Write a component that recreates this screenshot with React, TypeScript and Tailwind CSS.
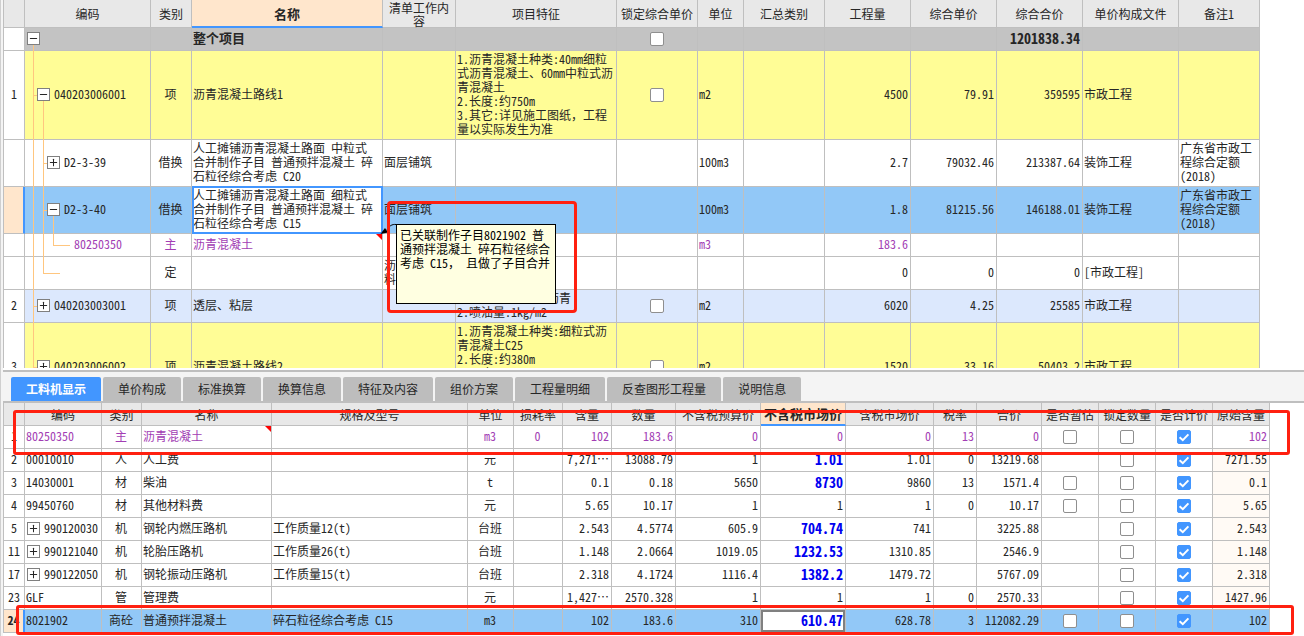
import { useState } from "react";
import { clsx } from "clsx";
import { Minus, Plus } from "lucide-react";

type Align = "left" | "center" | "right";

interface Column {
  title: string;
  width: number;
  align?: Align;
  active?: boolean;
}

const ALIGN: Record<Align, string> = {
  left: "text-left",
  center: "text-center",
  right: "text-right",
};

const CELL_BASE = "relative h-[23px] border-r border-b border-[#bfbfbf] pt-px pb-[3px] whitespace-pre";
const CELL = `${CELL_BASE} pl-px pr-0.5`;

// Latin text and digits are half-width, the comma keeps its full width
function CellText({ children }: { children: string }) {
  return children.split("，").map((part, i) => (
    <span key={i}>
      {i > 0 && <span className="[font-feature-settings:normal]">，</span>}
      {part}
    </span>
  ));
}

function HeaderRow({ columns, height }: { columns: Column[]; height: string }) {
  return (
    <thead className="leading-[13px]">
      <tr className={height}>
        <th className="border-r border-b border-l border-[#bfbfbf] bg-[#e8e8e8] p-0" />
        {columns.map((c) => (
          <th
            key={c.title}
            scope="col"
            className={clsx(
              "border-r p-0 whitespace-pre border-r-[#bfbfbf]",
              c.active
                ? "border-b-2 border-b-[#4296ff] bg-[#ffe6cc] text-[13px] font-bold"
                : "border-b border-b-[#bfbfbf] bg-[#e8e8e8] font-normal",
            )}
          >
            {c.title}
          </th>
        ))}
      </tr>
    </thead>
  );
}

function ColGroup({ columns }: { columns: Column[] }) {
  return (
    <colgroup>
      <col style={{ width: 22 }} />
      {columns.map((c) => (
        <col key={c.title} style={{ width: c.width }} />
      ))}
    </colgroup>
  );
}

function IndexCell({ value, selected }: { value: string; selected?: boolean }) {
  return (
    <td
      className={clsx(
        "border-b border-l border-[#bfbfbf] px-0 pt-0 pb-0.5 text-center text-[#262626]",
        selected ? "border-r-2 border-r-[#4296ff] bg-[#ffe6cc] font-bold" : "border-r bg-white",
      )}
    >
      {value}
    </td>
  );
}

function Check({ label, checked = false }: { label: string; checked?: boolean }) {
  const [on, setOn] = useState(checked);
  return (
    <span className="relative inline-block size-3.5 align-middle">
      <input
        type="checkbox"
        aria-label={label}
        checked={on}
        onChange={(e) => setOn(e.target.checked)}
        className="block size-3.5 appearance-none rounded-xs border border-[#8f8f8f] bg-white checked:border-[#4296ff] checked:bg-[#4296ff]"
      />
      {on && (
        <svg viewBox="0 0 14 14" className="pointer-events-none absolute inset-0 size-3.5">
          <path d="M2.6 7.2 L5.8 10.2 L11.4 4.4" fill="none" stroke="#fff" strokeWidth="2" />
        </svg>
      )}
    </span>
  );
}

function Toggle({ open, label }: { open: boolean; label: string }) {
  const Icon = open ? Minus : Plus;
  return (
    <button
      type="button"
      aria-label={label}
      aria-expanded={open}
      className="relative z-10 flex size-[13px] shrink-0 items-center justify-center border border-[#7f7f7f] bg-white"
    >
      <Icon className="size-[11px]" strokeWidth={2.2} />
    </button>
  );
}

function CommentMark() {
  return (
    <svg viewBox="0 0 6 6" className="absolute top-0 right-0 size-1.5">
      <path d="M0 0H6V6Z" fill="#f00" />
    </svg>
  );
}

// Guide lines of the outline: each entry is [x1, y1 %, x2, y2 %]
type Guide = [number, number, number, number];

function TreeGuides({ lines }: { lines: Guide[] }) {
  return (
    <svg className="pointer-events-none absolute top-0 left-0 h-[calc(100%+1px)] w-full">
      {lines.map(([x1, y1, x2, y2], i) => (
        <line key={i} x1={x1} y1={`${y1}%`} x2={x2} y2={`${y2}%`} stroke="#ffc67f" shapeRendering="crispEdges" />
      ))}
    </svg>
  );
}

const A = 8.5;
const B = 18.5;
const C = 28.5;

const billColumns: Column[] = [
  { title: "编码", width: 126 },
  { title: "类别", width: 41, align: "center" },
  { title: "名称", width: 191, active: true },
  { title: "清单工作内\n容", width: 73 },
  { title: "项目特征", width: 161 },
  { title: "锁定综合单价", width: 81, align: "center" },
  { title: "单位", width: 46 },
  { title: "汇总类别", width: 81 },
  { title: "工程量", width: 86, align: "right" },
  { title: "综合单价", width: 86, align: "right" },
  { title: "综合合价", width: 86, align: "right" },
  { title: "单价构成文件", width: 96 },
  { title: "备注1", width: 81 },
];

interface BillRow {
  index: string;
  code: string;
  indent: string;
  open?: boolean;
  guides: Guide[];
  tone: string;
  total?: boolean;
  selected?: boolean;
  comment?: boolean;
  lock?: boolean;
  cells: string[];
}

const billRows: BillRow[] = [
  {
    index: "",
    code: "",
    indent: "pl-0.5",
    open: true,
    guides: [[A, 50, A, 100]],
    tone: "bg-[#c3c3c3] font-bold text-[13px]",
    total: true,
    lock: true,
    cells: ["", "整个项目", "", "", "", "", "", "", "", "1201838.34", "", ""],
  },
  {
    index: "1",
    code: "040203006001",
    indent: "pl-3",
    open: true,
    guides: [[A, 0, A, 100], [A, 50, B, 50], [B, 50, B, 100]],
    tone: "bg-[#fffd96]",
    lock: true,
    cells: [
      "项",
      "沥青混凝土路线1",
      "",
      "1.沥青混凝土种类:40mm细粒\n式沥青混凝土、60mm中粒式沥\n青混凝土\n2.长度:约750m\n3.其它:详见施工图纸，工程\n量以实际发生为准",
      "",
      "m2",
      "",
      "4500",
      "79.91",
      "359595",
      "市政工程",
      "",
    ],
  },
  {
    index: "",
    code: "D2-3-39",
    indent: "pl-[22px]",
    open: false,
    guides: [[A, 0, A, 100], [B, 0, B, 100], [B, 50, C, 50]],
    tone: "bg-white",
    cells: [
      "借换",
      "人工摊铺沥青混凝土路面 中粒式\n合并制作子目 普通预拌混凝土 碎\n石粒径综合考虑 C20",
      "面层铺筑",
      "",
      "",
      "100m3",
      "",
      "2.7",
      "79032.46",
      "213387.64",
      "装饰工程",
      "广东省市政工\n程综合定额\n(2018)",
    ],
  },
  {
    index: "",
    code: "D2-3-40",
    indent: "pl-[22px]",
    open: true,
    guides: [[A, 0, A, 100], [B, 0, B, 100], [B, 50, C, 50], [C, 50, C, 100]],
    tone: "bg-[#92c8f7]",
    selected: true,
    cells: [
      "借换",
      "人工摊铺沥青混凝土路面 细粒式\n合并制作子目 普通预拌混凝土 碎\n石粒径综合考虑 C15",
      "面层铺筑",
      "",
      "",
      "100m3",
      "",
      "1.8",
      "81215.56",
      "146188.01",
      "装饰工程",
      "广东省市政工\n程综合定额\n(2018)",
    ],
  },
  {
    index: "",
    code: "80250350",
    indent: "pl-[49px]",
    guides: [[A, 0, A, 100], [B, 0, B, 100], [C, 0, C, 50], [C, 50, 45, 50]],
    tone: "bg-white text-[#a23db4]",
    comment: true,
    cells: ["主", "沥青混凝土", "", "", "", "m3", "", "183.6", "", "", "", ""],
  },
  {
    index: "",
    code: "",
    indent: "pl-3",
    guides: [[A, 0, A, 100], [B, 0, B, 50], [B, 50, 35, 50]],
    tone: "bg-white",
    cells: ["定", "", "沥\n料", "", "", "", "", "0", "0", "0", "[市政工程]", ""],
  },
  {
    index: "2",
    code: "040203003001",
    indent: "pl-3",
    open: false,
    guides: [[A, 0, A, 100], [A, 50, B, 50]],
    tone: "bg-[#dce8fd]",
    lock: true,
    cells: [
      "项",
      "透层、粘层",
      "",
      "1.材料品种:乳化沥青\n2.喷油量:1kg/m2",
      "",
      "m2",
      "",
      "6020",
      "4.25",
      "25585",
      "市政工程",
      "",
    ],
  },
  {
    index: "3",
    code: "040203006002",
    indent: "pl-3",
    open: false,
    guides: [[A, 0, A, 100], [A, 50, B, 50]],
    tone: "bg-[#fffd96]",
    lock: true,
    cells: [
      "项",
      "沥青混凝土路线2",
      "",
      "1.沥青混凝土种类:细粒式沥\n青混凝土C25\n2.长度:约380m\n3.厚度:40mm\n4.其它:详见施工图纸，工程\n量以实际发生为准",
      "",
      "m2",
      "",
      "1520",
      "33.16",
      "50403.2",
      "市政工程",
      "",
    ],
  },
];

function Note() {
  return (
    <div className="absolute top-[37px] left-[204px] z-20 h-20 w-40 border border-black bg-[#ffffe1] px-[3px] py-[3px] text-black">
      <svg viewBox="0 0 18 12" className="absolute -top-0.5 -left-[18px] h-3 w-[18px] overflow-visible">
        <path d="M17 1.5C13 1 10 3 8 7" fill="none" stroke="#000" />
        <path d="M1.5 11L6 5L9 9.5Z" fill="#000" />
      </svg>
      <CellText>{"已关联制作子目8021902 普\n通预拌混凝土 碎石粒径综合\n考虑 C15， 且做了子目合并"}</CellText>
      <span className="absolute -top-6 -left-2.5 h-28 w-[190px] rounded-[4px] border-3 border-[#ff2010]" />
    </div>
  );
}

function BillTable() {
  return (
    <table className="w-[1257px] table-fixed border-separate border-spacing-0">
      <ColGroup columns={billColumns} />
      <HeaderRow columns={billColumns} height="h-7" />
      <tbody>
        {billRows.map((row, r) => (
          <tr key={r} className={row.tone}>
            <IndexCell value={row.index} selected={row.selected} />
            <td className={CELL_BASE}>
              <TreeGuides lines={row.guides} />
              <span className={clsx("flex items-center gap-1", row.indent)}>
                {row.open !== undefined && <Toggle open={row.open} label={row.code || row.cells[1]} />}
                {row.code}
              </span>
            </td>
            {row.cells.map((text, i) => {
              const column = billColumns[i + 1];
              const isName = i === 1;
              return (
                <td
                  key={column.title}
                  className={clsx(
                    CELL,
                    ALIGN[column.align ?? "left"],
                    isName && row.selected && "bg-white",
                    row.total && column.align === "right" && "text-[14px]",
                  )}
                >
                  <CellText>{text}</CellText>
                  {i === 4 && row.lock && <Check label={column.title} />}
                  {isName && row.comment && <CommentMark />}
                  {isName && row.selected && (
                    <>
                      <span className="pointer-events-none absolute -top-px -right-px -bottom-px left-0 border-2 border-[#4296ff]" />
                      <Note />
                    </>
                  )}
                </td>
              );
            })}
          </tr>
        ))}
      </tbody>
    </table>
  );
}

const tabs = [
  "工料机显示",
  "单价构成",
  "标准换算",
  "换算信息",
  "特征及内容",
  "组价方案",
  "工程量明细",
  "反查图形工程量",
  "说明信息",
];

function TabBar() {
  const [current, setCurrent] = useState(tabs[0]);
  return (
    <div role="tablist" className="flex items-end gap-0.5 border-b-2 border-[#bfbfbf] bg-[#f4f4f4] pt-[5px] pl-2">
      {tabs.map((tab) => (
        <button
          key={tab}
          type="button"
          role="tab"
          aria-selected={tab === current}
          onClick={() => setCurrent(tab)}
          className={clsx(
            "h-6 rounded-t-xs px-[15px]",
            tab === current ? "bg-[#4296ff] font-bold text-white" : "bg-[#bdbdbd]",
          )}
        >
          {tab}
        </button>
      ))}
    </div>
  );
}

const resourceColumns: Column[] = [
  { title: "编码", width: 77 },
  { title: "类别", width: 40, align: "center" },
  { title: "名称", width: 130 },
  { title: "规格及型号", width: 196 },
  { title: "单位", width: 46, align: "center" },
  { title: "损耗率", width: 49, align: "center" },
  { title: "含量", width: 49, align: "right" },
  { title: "数量", width: 64, align: "right" },
  { title: "不含税预算价", width: 85, align: "right" },
  { title: "不含税市场价", width: 85, align: "right", active: true },
  { title: "含税市场价", width: 88, align: "right" },
  { title: "税率", width: 43, align: "right" },
  { title: "合价", width: 65, align: "right" },
  { title: "是否暂估", width: 57, align: "center" },
  { title: "锁定数量", width: 57, align: "center" },
  { title: "是否计价", width: 57, align: "center" },
  { title: "原始含量", width: 57, align: "right" },
];

interface ResourceRow {
  index: string;
  cells: string[];
  original: string;
  group?: boolean;
  estimate?: boolean;
  edited?: boolean;
  linked?: boolean;
  selected?: boolean;
}

const resourceRows: ResourceRow[] = [
  { index: "1", cells: ["80250350", "主", "沥青混凝土", "", "m3", "0", "102", "183.6", "0", "0", "0", "13", "0"], original: "102", estimate: true, linked: true },
  { index: "2", cells: ["00010010", "人", "人工费", "", "元", "", "7,271⋯", "13088.79", "1", "1.01", "1.01", "0", "13219.68"], original: "7271.55", edited: true },
  { index: "3", cells: ["14030001", "材", "柴油", "", "t", "", "0.1", "0.18", "5650", "8730", "9860", "13", "1571.4"], original: "0.1", estimate: true, edited: true },
  { index: "4", cells: ["99450760", "材", "其他材料费", "", "元", "", "5.65", "10.17", "1", "1", "1", "0", "10.17"], original: "5.65", estimate: true },
  { index: "5", cells: ["990120030", "机", "钢轮内燃压路机", "工作质量12(t)", "台班", "", "2.543", "4.5774", "605.9", "704.74", "741", "", "3225.88"], original: "2.543", group: true, edited: true },
  { index: "11", cells: ["990121040", "机", "轮胎压路机", "工作质量26(t)", "台班", "", "1.148", "2.0664", "1019.05", "1232.53", "1310.85", "", "2546.9"], original: "1.148", group: true, edited: true },
  { index: "17", cells: ["990122050", "机", "钢轮振动压路机", "工作质量15(t)", "台班", "", "2.318", "4.1724", "1116.4", "1382.2", "1479.72", "", "5767.09"], original: "2.318", group: true, edited: true },
  { index: "23", cells: ["GLF", "管", "管理费", "", "元", "", "1,427⋯", "2570.328", "1", "1", "1", "0", "2570.33"], original: "1427.96" },
  { index: "24", cells: ["8021902", "商砼", "普通预拌混凝土", "碎石粒径综合考虑 C15", "m3", "", "102", "183.6", "310", "610.47", "628.78", "3", "112082.29"], original: "102", estimate: true, edited: true, selected: true },
];

const PRICE = 9;

function ResourceTable() {
  return (
    <table className="w-[1267px] table-fixed border-separate border-spacing-0">
      <ColGroup columns={resourceColumns} />
      <HeaderRow columns={resourceColumns} height="h-[23px]" />
      <tbody>
        {resourceRows.map((row) => (
          <tr
            key={row.index}
            className={clsx(row.selected ? "bg-[#92c8f7]" : "bg-white", row.linked && "text-[#a23db4]")}
          >
            <IndexCell value={row.index} selected={row.selected} />
            {row.cells.map((text, i) => (
              <td
                key={resourceColumns[i].title}
                className={clsx(
                  CELL,
                  ALIGN[resourceColumns[i].align ?? "left"],
                  i === PRICE && row.edited && "text-[14px] font-bold text-[#0000f0]",
                  i === PRICE && row.selected && "bg-white",
                )}
              >
                {i === 0 && row.group ? (
                  <span className="flex items-center gap-1 pl-px">
                    <Toggle open={false} label={text} />
                    {text}
                  </span>
                ) : (
                  text
                )}
                {i === 2 && row.linked && <CommentMark />}
                {i === PRICE && row.selected && (
                  <span className="pointer-events-none absolute inset-0 border-2 border-[#808080]" />
                )}
              </td>
            ))}
            <td className={clsx(CELL, "text-center")}>{row.estimate && <Check label="是否暂估" />}</td>
            <td className={clsx(CELL, "text-center")}>
              <Check label="锁定数量" />
            </td>
            <td className={clsx(CELL, "text-center")}>
              <Check label="是否计价" checked />
            </td>
            <td className={clsx(CELL, "text-right", !row.selected && !row.linked && "bg-[#fffaf5]")}>
              {row.original}
            </td>
          </tr>
        ))}
      </tbody>
    </table>
  );
}

export default function App() {
  return (
    <div
      lang="zh-CN"
      className="flex h-screen flex-col overflow-hidden border-l border-[#cfcfcf] bg-[#f4f4f4] pl-0.5 font-['Noto_Sans_CJK_SC',sans-serif] text-[12px] leading-[14px] text-[#262626] [font-feature-settings:'hwid']"
    >
      <div className="min-h-0 flex-1 border-b-2 border-[#bfbfbf] bg-white pb-0.5">
        <div className="h-full overflow-hidden">
          <BillTable />
        </div>
      </div>
      <TabBar />
      <div className="relative bg-white pb-[3px]">
        <ResourceTable />
        <span className="pointer-events-none absolute top-[7px] right-[14px] left-2.5 h-[45px] rounded-[3px] border-3 border-[#ff2010]" />
        <span className="pointer-events-none absolute right-2.5 bottom-px left-[13px] h-[30px] rounded-[3px] border-3 border-[#ff2010]" />
      </div>
    </div>
  );
}
